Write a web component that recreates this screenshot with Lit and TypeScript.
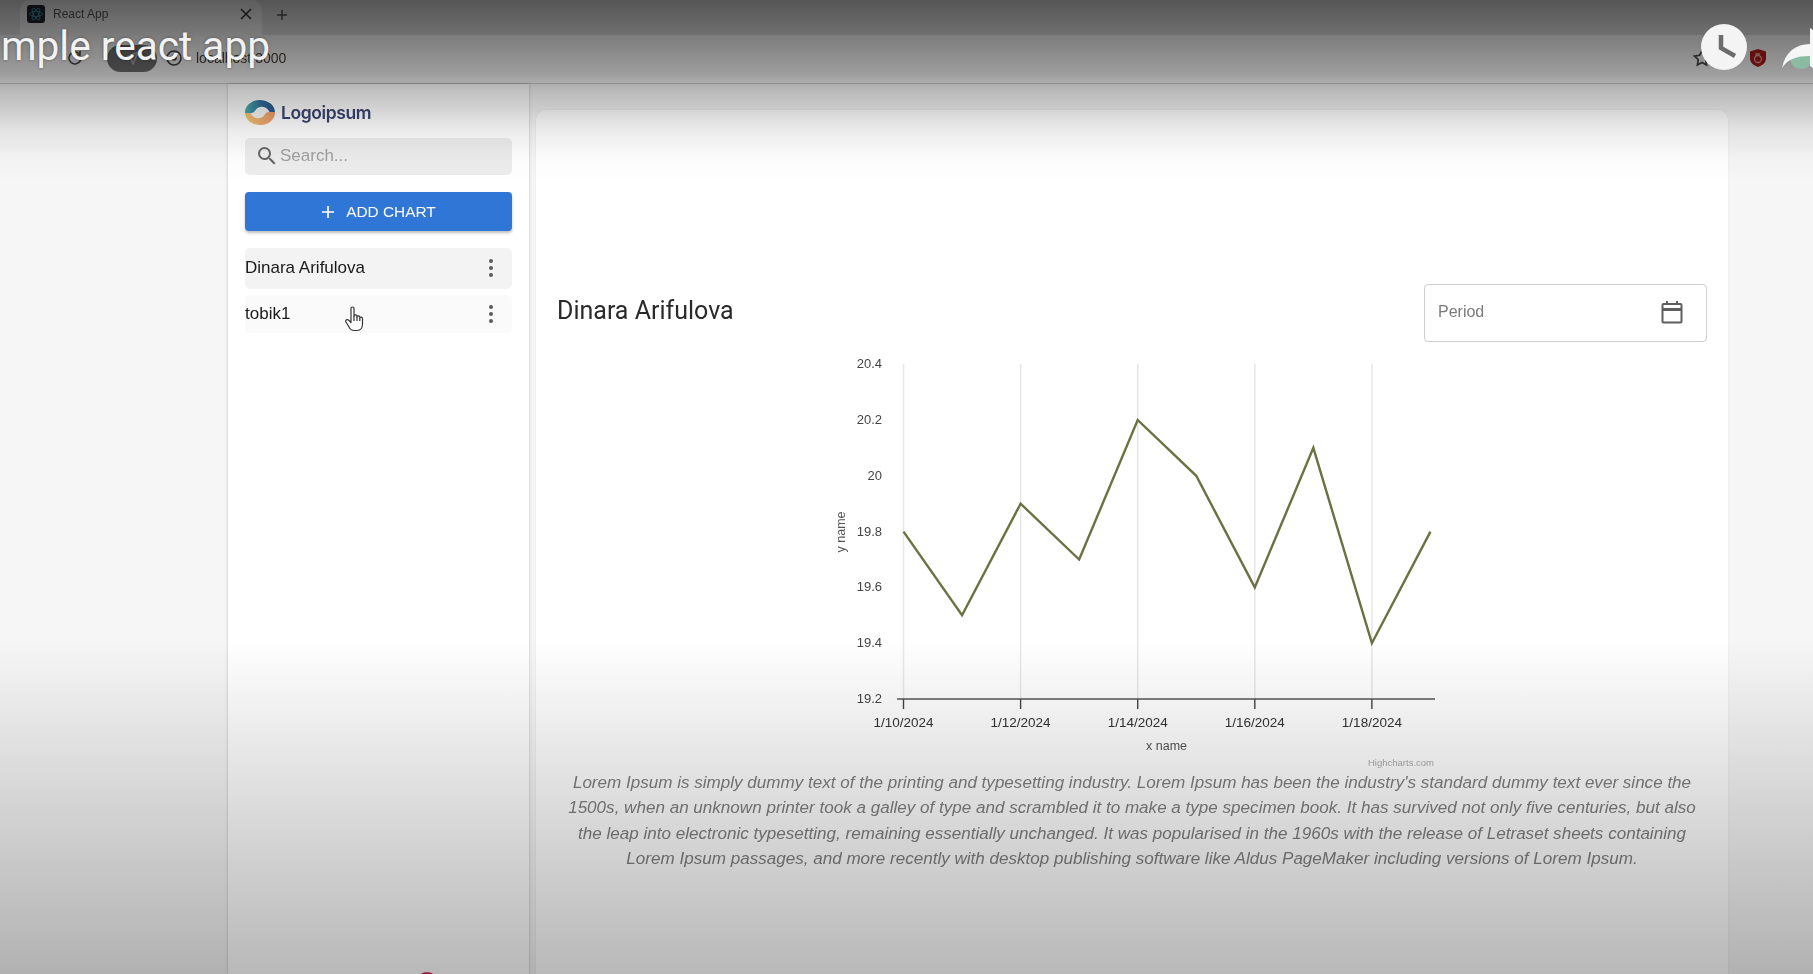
import { LitElement, html, css, svg } from "lit";
import { customElement } from "lit/decorators.js";

const PTS = [19.8, 19.5, 19.9, 19.7, 20.2, 20, 19.6, 20.1, 19.4, 19.8];
const X0 = 904.5;
const DX = 58.55;
const BASE = 699;
const yOf = (v: number) => BASE - ((v - 19.2) / 0.2) * 55.8;
const YT = [20.4, 20.2, 20, 19.8, 19.6, 19.4, 19.2];
const XT = ["1/10/2024", "1/12/2024", "1/14/2024", "1/16/2024", "1/18/2024"];

@customElement("app-root")
export class AppRoot extends LitElement {
  static styles = css`
    :host { display: block; width: 1813px; height: 974px; position: relative; overflow: hidden; background: #f6f6f6; font-family: "Liberation Sans", Arial, sans-serif; }
    .soft { filter: blur(0.35px); }
    .tabs { height: 35px; background: #e0e0e0; display: flex; align-items: flex-end; padding-left: 20px; box-sizing: border-box; }
    .tab { width: 242px; height: 35px; background: #f4f4f4; border-radius: 10px 10px 0 0; display: flex; align-items: center; padding: 0 10px 8px 7px; box-sizing: border-box; gap: 8px; font-size: 12px; color: #555; }
    .fav { width: 18px; height: 18px; border-radius: 3px; background: #20232a; display: flex; align-items: center; justify-content: center; }
    .tab .ttl { flex: 1; }
    .plus { margin-left: 12px; padding-bottom: 12px; }
    .tool { height: 46px; background: #f8f8f8; display: flex; align-items: center; padding: 0 0 4px 66px; box-sizing: border-box; margin-top: 2px; }
    .pill { width: 50px; height: 27px; border-radius: 14px; background: #6e6e6e; margin-left: 23px; display: flex; align-items: center; justify-content: center; }
    .info { margin-left: 8px; margin-right: 13px; display: flex; }
    .url { font-size: 14px; color: #4a4034; width: 93px; }
    .rt { margin-left: auto; display: flex; align-items: center; padding-right: 47px; gap: 38px; }
    .sep { height: 1px; background: #ccc; }
    .body { height: 890px; display: flex; padding-left: 228px; box-sizing: border-box; }
    .side { width: 301px; background: #fff; box-shadow: 0 0 3px rgba(0,0,0,.22); padding: 16px 17px 0; box-sizing: border-box; display: flex; flex-direction: column; flex-shrink: 0; }
    .brand { display: flex; align-items: center; gap: 6px; height: 25px; font-family: Inter, "Liberation Sans", sans-serif; font-weight: 600; font-size: 17.500px; color: #3a4570; letter-spacing: -.4px; }
    .search { height: 37px; margin-top: 13px; background: #ededed; border-radius: 5px; display: flex; align-items: center; padding: 0 0 2px 10px; gap: 1px; color: #a0a0a0; font-family: "Liberation Sans", sans-serif; font-size: 17px; box-sizing: border-box; }
    .add { height: 39px; margin-top: 17px; background: #2f76d6; color: #fff; border-radius: 4px; box-shadow: 0 2px 3px rgba(0,0,0,.25); display: flex; align-items: center; justify-content: center; gap: 11px; font-family: "Liberation Sans", sans-serif; font-size: 15.400px; }
    .row { display: flex; align-items: center; justify-content: space-between; padding-right: 19px; font-size: 17px; color: #1a1a1a; border-radius: 5px; position: relative; }
    .r1 { height: 41px; margin-top: 17px; background: #f3f3f3; padding-bottom: 2px; box-sizing: border-box; }
    .r2 { height: 38px; margin-top: 6px; background: #fafafa; }
    .dots { display: flex; flex-direction: column; gap: 3px; }
    .dots i { width: 4px; height: 4px; border-radius: 50%; background: #5a5a5a; display: block; }
    .hand { position: absolute; left: 100px; top: 11px; }
    .gutter { flex: 1; padding: 26px 5px 0 7px; box-shadow: inset -5px 0 0 #f6f6f6; display: flex; }
    .card { width: 1192px; background: #fff; border-radius: 10px 10px 0 0; box-shadow: 0 0 2px rgba(0,0,0,.08); padding: 173px 21px 0; box-sizing: border-box; }
    .head { display: flex; align-items: center; justify-content: space-between; height: 59px; }
    h1 { margin: 0 0 4px; font-family: Roboto, sans-serif; font-weight: 400; font-size: 25px; color: #2a2a2a; }
    .period { width: 283px; height: 58px; border: 1.500px solid #cfcfcf; border-radius: 4px; box-sizing: border-box; display: flex; align-items: center; justify-content: space-between; padding: 0 23px 2px 13px; color: #7a7a7a; font-size: 16px; }
    .chart { display: block; margin-top: 8px; margin-left: 219px; }
    .chart text { font-family: "Liberation Sans", sans-serif; }
    p { margin: -5px 0 0; font-size: 17.070px; line-height: 25.300px; font-style: italic; color: #808080; text-align: center; white-space: nowrap; }
    .arc { position: absolute; left: 421px; top: 972px; }
    .shade { position: absolute; inset: 0; pointer-events: none;
      background: linear-gradient(180deg, rgba(0,0,0,.62) 0, rgba(0,0,0,.5) 35px, rgba(0,0,0,.36) 75px, rgba(0,0,0,.25) 90px, rgba(0,0,0,.17) 110px, rgba(0,0,0,.08) 130px, rgba(0,0,0,.015) 160px, rgba(0,0,0,0) 185px, rgba(0,0,0,0) 640px, rgba(0,0,0,.1) 760px, rgba(0,0,0,.28) 974px); }
    .title { position: absolute; left: 1px; top: 22px; white-space: nowrap; font-family: Roboto, sans-serif; font-size: 40.600px; line-height: 48px; color: #f2f2f2; text-shadow: 0 0 3px rgba(0,0,0,.4); }
    .clock { position: absolute; left: 1701px; top: 24px; width: 46px; height: 46px; }
    .share { position: absolute; left: 1780px; top: 26px; }
  `;

  render() {
    return html`
      <div class="tabs soft">
        <div class="tab">
          <span class="fav"><svg width="14" height="14" viewBox="-12 -12 24 24" fill="none" stroke="#3aa6c4" stroke-width="1.4"><ellipse rx="11" ry="4.2"/><ellipse rx="11" ry="4.2" transform="rotate(60)"/><ellipse rx="11" ry="4.2" transform="rotate(120)"/></svg></span>
          <span class="ttl">React App</span>
          <svg width="12" height="12" viewBox="0 0 12 12" stroke="#333" stroke-width="1.5"><path d="M1 1l10 10M11 1L1 11"/></svg>
        </div>
        <svg class="plus" width="16" height="16" viewBox="0 0 16 16" stroke="#555" stroke-width="1.5"><path d="M8 3v10M3 8h10"/></svg>
      </div>
      <div class="tool soft">
        <svg width="18" height="18" viewBox="0 0 18 18" fill="none" stroke="#444" stroke-width="1.6"><path d="M15 9a6 6 0 1 1-2-4.5"/><path d="M14 2v4h-4"/></svg>
        <div class="pill"><svg width="14" height="14" viewBox="0 0 14 14" fill="none" stroke="#aaa" stroke-width="1.4"><path d="M1 6l12-5-5 12-2-5z"/></svg></div>
        <span class="info"><svg width="18" height="18" viewBox="0 0 18 18" fill="none" stroke="#444" stroke-width="1.6"><circle cx="9" cy="9" r="7"/><circle cx="9" cy="9" r="2"/></svg></span>
        <span class="url">localhost:3000</span>
        <div class="rt">
          <svg width="20" height="20" viewBox="0 0 24 24" fill="none" stroke="#444" stroke-width="2"><path d="M12 3l2.800 5.800 6.200.9-4.500 4.400 1 6.300-5.500-3-5.500 3 1-6.300L3 9.700l6.200-.9z"/></svg>
          <svg width="16" height="18" viewBox="0 0 16 18"><path d="M8 0l8 2.500v7c0 4-3.500 7-8 8.500-4.500-1.500-8-4.500-8-8.500v-7z" fill="#b01a1a"/><circle cx="8" cy="10" r="3.500" fill="none" stroke="#e8a0a0" stroke-width="1.300"/><path d="M6 7V5h4" fill="none" stroke="#e8a0a0" stroke-width="1.300"/></svg>
        </div>
      </div>
      <div class="sep"></div>
      <div class="body soft">
        <aside class="side">
          <div class="brand">
            <svg width="30" height="25" viewBox="0 0 30 25">
              <defs>
                <linearGradient id="lt" x1="0" y1="0" x2="1" y2="0"><stop offset="0" stop-color="#4bb0ac"/><stop offset=".6" stop-color="#2f6a9a"/><stop offset="1" stop-color="#2c5a90"/></linearGradient>
                <linearGradient id="lb" x1="0" y1="0" x2="1" y2="0"><stop offset="0" stop-color="#f4c870"/><stop offset="1" stop-color="#f09a6c"/></linearGradient>
              </defs>
              <ellipse cx="15" cy="12.500" rx="15" ry="12.500" fill="#fafafa"/>
              <path d="M0 13A15 12.500 0 0 1 30 12H24.500C22 6 14 5 11 9.500C9.500 12 8 13 6 13Z" fill="url(#lt)"/>
              <path d="M30 12A15 12.500 0 0 1 0 13H5.500C8 19 16 20 19 15.500C20.500 13 22 12 24 12Z" fill="url(#lb)"/>
            </svg>
            <span>Logoipsum</span>
          </div>
          <div class="search">
            <svg width="24" height="24" viewBox="0 0 24 24" fill="#666"><path d="M15.500 14h-.79l-.28-.27A6.470 6.470 0 0 0 16 9.500 6.500 6.500 0 1 0 9.500 16c1.610 0 3.090-.59 4.230-1.570l.27.28v.79l5 4.990L20.490 19l-4.990-5zm-6 0C7.010 14 5 11.990 5 9.500S7.010 5 9.500 5 14 7.010 14 9.500 11.990 14 9.500 14z"/></svg>
            <span>Search...</span>
          </div>
          <div class="add">
            <svg width="14" height="14" viewBox="0 0 14 14" stroke="#fff" stroke-width="1.700"><path d="M7 1v12M1 7h12"/></svg>
            <span>ADD CHART</span>
          </div>
          <div class="row r1"><span>Dinara Arifulova</span><span class="dots"><i></i><i></i><i></i></span></div>
          <div class="row r2"><span>tobik1</span><span class="dots"><i></i><i></i><i></i></span>
            <svg class="hand" width="20" height="26" viewBox="0 0 20 26" fill="#fff" stroke="#333" stroke-width="1.200" stroke-linejoin="round"><path d="M6 2.500c0-2 3-2 3 0V10c0-1.500 3-1.500 3 0v1c0-1.500 2.800-1.500 2.800 0v1c0-1.300 2.700-1.300 2.700.5v5.500c0 3.500-2 6.500-5.500 6.500H9c-2.500 0-4-1.500-5-3.500L1 16c-1-2 1.500-3.500 3-1.500L6 16.500z"/><path d="M9 10v5M12 11v4M14.800 12v3" /></svg>
          </div>
        </aside>
        <div class="gutter">
          <main class="card">
            <div class="head">
              <h1>Dinara Arifulova</h1>
              <div class="period"><span>Period</span>
                <svg width="22" height="24" viewBox="0 0 22 24" fill="none" stroke="#5f5f5f" stroke-width="2"><rect x="1.500" y="4" width="19" height="18.500" rx="1"/><path d="M1.500 9.500h19" stroke-width="3"/><path d="M6 1v4M16 1v4"/></svg>
              </div>
            </div>
            ${this.chart()}
            <p>Lorem Ipsum is simply dummy text of the printing and typesetting industry. Lorem Ipsum has been the industry's standard dummy text ever since the<br>1500s, when an unknown printer took a galley of type and scrambled it to make a type specimen book. It has survived not only five centuries, but also<br>the leap into electronic typesetting, remaining essentially unchanged. It was popularised in the 1960s with the release of Letraset sheets containing<br>Lorem Ipsum passages, and more recently with desktop publishing software like Aldus PageMaker including versions of Lorem Ipsum.</p>
          </main>
        </div>
      </div>
      <svg class="arc" width="12" height="2" viewBox="0 0 12 2"><path d="M0 2c2-2.500 10-2.500 12 0z" fill="#e01850"/></svg>
      <div class="shade"></div>
      <div class="title">mple react app</div>
      <svg class="clock" viewBox="0 0 46 46"><circle cx="23" cy="23" r="23" fill="#f4f4f4"/><path d="M20 11v13l14 8" fill="none" stroke="#6c6c6c" stroke-width="4.500"/></svg>
      <svg class="share" width="33" height="44" viewBox="0 0 33 44"><circle cx="21" cy="32" r="11" fill="#8cbba4"/><path d="M2 42c3-16 14-24 28-24V2l3 2v38l-3-2V30c-14 0-22 3-28 12z" fill="#f6f6f6"/></svg>
    `;
  }

  chart() {
    const ox = 777, oy = 350;
    const line = PTS.map((v, i) => `${X0 + i * DX - ox},${yOf(v) - oy}`).join(" ");
    return html`<svg class="chart" width="680" height="425" viewBox="0 0 680 425">
      ${XT.map((_, i) => { const x = X0 + i * 2 * DX - ox; return svg`<line x1=${x} x2=${x} y1="14" y2=${BASE - oy} stroke="#e8e8e8" stroke-width="1.600"/><line x1=${x} x2=${x} y1=${BASE - oy} y2=${BASE + 10 - oy} stroke="#444" stroke-width="1.400"/><text x=${x} y=${727 - oy} text-anchor="middle" font-size="13.500" fill="#333">${XT[i]}</text>`; })}
      <line x1=${898 - ox} x2=${1436 - ox} y1=${BASE - oy} y2=${BASE - oy} stroke="#555" stroke-width="1.600"/>
      ${YT.map((v) => svg`<text x=${883 - ox} y=${yOf(v) - oy + 4} text-anchor="end" font-size="13" fill="#444">${String(v)}</text>`)}
      <polyline points=${line} fill="none" stroke="#6c7143" stroke-width="2.400" stroke-linejoin="miter"/>
      <text x=${1167.500 - ox} y=${750 - oy} text-anchor="middle" font-size="12.500" fill="#555">x name</text>
      <text transform="translate(${846 - ox} ${532 - oy}) rotate(-90)" text-anchor="middle" font-size="12.500" fill="#555">y name</text>
      <text x=${1435 - ox} y=${766 - oy} text-anchor="end" font-size="9.500" fill="#aaa">Highcharts.com</text>
    </svg>`;
  }
}
